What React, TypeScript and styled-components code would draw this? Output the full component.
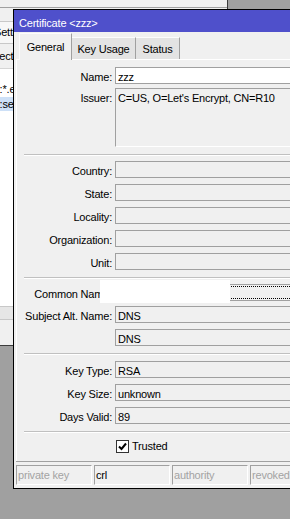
import React from "react";
import styled, { createGlobalStyle } from "styled-components";

const GlobalStyle = createGlobalStyle`
  html, body {
    margin: 0;
    padding: 0;
  }
  body {
    width: 290px;
    height: 519px;
    overflow: hidden;
    font-family: "Liberation Sans", Arial, sans-serif;
    font-size: 11px;
    letter-spacing: -0.2px;
    color: #000;
  }
  * {
    box-sizing: border-box;
  }
`;

const Desktop = styled.div`
  position: relative;
  width: 290px;
  height: 519px;
  overflow: hidden;
  background: #a0a0a0;
`;

/* the list window sitting behind the dialog */
const BackWindow = styled.div`
  position: absolute;
  left: -100px;
  top: -30px;
  width: 328px;
  height: 376px;
  display: flex;
  flex-direction: column;
  background: #f0f0f0;
  border-right: 1px solid #3c3c3c;
  border-bottom: 1px solid #3c3c3c;
`;

const BackTop = styled.div`
  height: 38px;
  border-bottom: 1px solid #a0a0a0;
`;

const BackTabs = styled.div`
  height: 36px;
  display: flex;
  align-items: flex-end;
  padding-left: 88px;
  border-bottom: 1px solid #c8c8c8;
`;

const BackTab = styled.div`
  height: 22px;
  padding: 0 5px;
  line-height: 20px;
  background: #f7f7f7;
  border: 1px solid #c8c8c8;
  border-bottom: none;
`;

const BackHeader = styled.div`
  height: 25px;
  line-height: 24px;
  padding-left: 78px;
  border-bottom: 1px solid #d5d5d5;
`;

const BackList = styled.div`
  flex: 1;
  background: #fff;
  padding-top: 13px;
  display: flex;
  flex-direction: column;
  gap: 1px;
`;

const BackRow = styled.div<{ $selected?: boolean }>`
  height: 14px;
  line-height: 14px;
  padding-left: 77px;
  white-space: nowrap;
  background: ${(p) => (p.$selected ? "#cde0f7" : "transparent")};
`;

const BackScroll = styled.div`
  height: 14px;
  background: #e6e6e6;
  border-top: 1px solid #c8c8c8;
  border-bottom: 1px solid #c8c8c8;
`;

const BackFoot = styled.div`
  height: 25px;
`;

/* certificate dialog */
const Dialog = styled.div`
  position: absolute;
  left: 13px;
  top: 9px;
  width: 330px;
  height: 480px;
  display: flex;
  flex-direction: column;
  background: #f0f0f0;
  border: 1px solid #000;
`;

const TitleBar = styled.div`
  height: 22px;
  padding: 4px 0 0 5px;
  line-height: 18px;
  background: #4f50cb;
  color: #fff;
  white-space: nowrap;
`;

const Body = styled.div`
  flex: 1;
  display: flex;
  flex-direction: column;
  padding-left: 2px;
`;

const TabStrip = styled.div`
  height: 27px;
  display: flex;
  align-items: flex-end;
  padding-left: 3px;
`;

const Tab = styled.div<{ $active?: boolean; $w: number }>`
  position: relative;
  z-index: 1;
  width: ${(p) => p.$w}px;
  height: ${(p) => (p.$active ? 27 : 22)}px;
  margin-bottom: ${(p) => (p.$active ? -1 : 0)}px;
  display: flex;
  align-items: center;
  justify-content: center;
  padding-top: ${(p) => (p.$active ? 0 : 1)}px;
  background: ${(p) => (p.$active ? "#f0f0f0" : "#e3e3e3")};
  border-top: 1px solid #fcfcfc;
  border-left: ${(p) => (p.$active ? "1px solid #fcfcfc" : "none")};
  border-right: 1px solid #a0a0a0;
  white-space: nowrap;
`;

const Panel = styled.div`
  flex: 1;
  display: flex;
  flex-direction: column;
  padding: 7px 0 0 7px;
  border-top: 1px solid #fff;
  border-left: 1px solid #fff;
`;

const Row = styled.div<{ $mt?: number }>`
  display: grid;
  grid-template-columns: 88px 1fr;
  column-gap: 3px;
  margin-top: ${(p) => p.$mt ?? 6}px;
`;

const Label = styled.div`
  height: 17px;
  text-align: right;
  white-space: nowrap;
  padding-top: 3px;
  line-height: 14px;
`;

const Field = styled.div<{ $h?: number; $white?: boolean; $focus?: boolean; $soft?: boolean }>`
  height: ${(p) => p.$h ?? 17}px;
  padding: 2px 0 0 2px;
  line-height: 14px;
  white-space: nowrap;
  background: ${(p) => (p.$white ? "#fff" : "#f0f0f0")};
  border: 1px solid #a0a0a0;
  border-bottom-color: ${(p) => (p.$soft ? "#fff" : "#a0a0a0")};
  outline: ${(p) => (p.$focus ? "1px dotted #000" : "none")};
  outline-offset: -3px;
`;

const Separator = styled.div<{ $mt?: number }>`
  height: 2px;
  margin-top: ${(p) => p.$mt ?? 7}px;
  border-top: 1px solid #c0c0c0;
  border-bottom: 1px solid #fff;
`;

const CheckLine = styled.div`
  display: flex;
  align-items: center;
  gap: 3px;
  height: 13px;
  padding-left: 1px;
  line-height: 13px;
`;

const CheckBox = styled.div`
  width: 13px;
  height: 13px;
  background: #fff;
  border: 1px solid #333;
  display: flex;
  align-items: center;
  justify-content: center;
`;

const StatusBar = styled.div`
  height: 27px;
  display: flex;
  gap: 2px;
  padding-top: 3px;
  border-top: 1px solid #a0a0a0;
`;

const StatusCell = styled.div<{ $off?: boolean }>`
  width: 76px;
  height: 20px;
  flex: none;
  padding-left: 1px;
  line-height: 18px;
  white-space: nowrap;
  overflow: hidden;
  color: ${(p) => (p.$off ? "#a3a3a3" : "#000")};
  border-top: 1px solid #a0a0a0;
  border-left: 1px solid #a0a0a0;
  border-right: 1px solid #fff;
  border-bottom: 1px solid #fff;
`;

/* white patch pasted over the common name */
const Redaction = styled.div`
  position: absolute;
  left: 100px;
  top: 280px;
  width: 130px;
  height: 23px;
  background: #fff;
`;

const addressFields = [
  { label: "Country:", mt: 5 },
  { label: "State:" },
  { label: "Locality:" },
  { label: "Organization:" },
  { label: "Unit:" },
];

const Check = () => (
  <svg width="11" height="11" viewBox="0 0 11 11">
    <path d="M2 5.5 L4.5 8 L9 2.5" fill="none" stroke="#000" strokeWidth="2" />
  </svg>
);

export default function App() {
  return (
    <Desktop>
      <GlobalStyle />
      <BackWindow>
        <BackTop />
        <BackTabs>
          <BackTab>Settings</BackTab>
        </BackTabs>
        <BackHeader>Subject</BackHeader>
        <BackList>
          <BackRow>DNS:*.example.com</BackRow>
          <BackRow $selected>DNS:service.example.com</BackRow>
        </BackList>
        <BackScroll />
        <BackFoot />
      </BackWindow>

      <Dialog>
        <TitleBar>Certificate &lt;zzz&gt;</TitleBar>
        <Body>
          <TabStrip>
            <Tab $active $w={53}>General</Tab>
            <Tab $w={64}>Key Usage</Tab>
            <Tab $w={44}>Status</Tab>
          </TabStrip>
          <Panel>
            <Row $mt={0}>
              <Label>Name:</Label>
              <Field $white>zzz</Field>
            </Row>
            <Row $mt={4}>
              <Label>Issuer:</Label>
              <Field $h={59} $soft>
                C=US, O=Let's Encrypt, CN=R10
              </Field>
            </Row>

            <Separator />
            {addressFields.map((f) => (
              <Row key={f.label} $mt={f.mt}>
                <Label>{f.label}</Label>
                <Field />
              </Row>
            ))}

            <Separator />
            <Row $mt={5}>
              <Label>Common Name:</Label>
              <Field $focus />
            </Row>
            <Row $mt={5}>
              <Label>Subject Alt. Name:</Label>
              <Field>DNS</Field>
            </Row>
            <Row>
              <Label />
              <Field>DNS</Field>
            </Row>

            <Separator />
            <Row>
              <Label>Key Type:</Label>
              <Field>RSA</Field>
            </Row>
            <Row>
              <Label>Key Size:</Label>
              <Field>unknown</Field>
            </Row>
            <Row>
              <Label>Days Valid:</Label>
              <Field>89</Field>
            </Row>

            <Separator />
            <Row $mt={7}>
              <Label />
              <CheckLine>
                <CheckBox>
                  <Check />
                </CheckBox>
                Trusted
              </CheckLine>
            </Row>
          </Panel>
          <StatusBar>
            <StatusCell $off>private key</StatusCell>
            <StatusCell>crl</StatusCell>
            <StatusCell $off>authority</StatusCell>
            <StatusCell $off>revoked</StatusCell>
          </StatusBar>
        </Body>
      </Dialog>
      <Redaction />
    </Desktop>
  );
}
